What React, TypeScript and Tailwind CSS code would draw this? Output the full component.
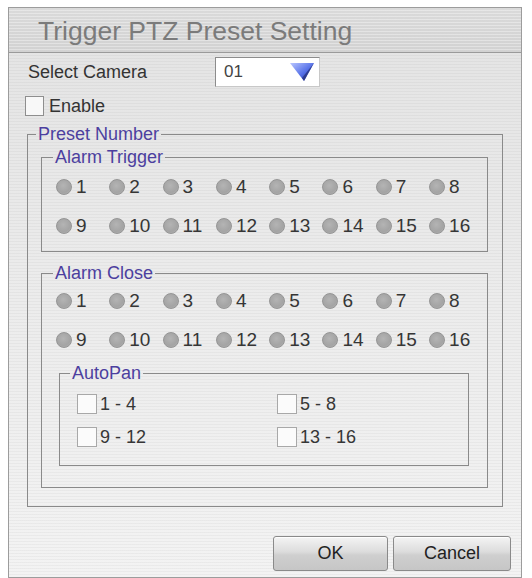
import React from "react";

const presets = Array.from({ length: 16 }, (_, i) => i + 1);
const autoPanRanges = ["1 - 4", "5 - 8", "9 - 12", "13 - 16"];

function Radio({ label }: { label: number }) {
  return (
    <label className="flex items-center h-[20px] gap-[4px] text-[19px] leading-[20px] text-[#363636]">
      <span className="block shrink-0 w-[16px] h-[16px] rounded-full border border-[#959595] bg-[radial-gradient(circle_at_45%_40%,#b4b4b4_0%,#a4a4a4_60%,#b8b8b8_100%)]" />
      {label}
    </label>
  );
}

function CheckBox({ label }: { label: string }) {
  return (
    <label className="flex items-center h-[20px] gap-[3px] text-[18px] leading-[20px] text-[#363636]">
      <span className="block shrink-0 w-[20px] h-[20px] border border-[#a8a8a8] bg-[#fbfbfb]" />
      {label}
    </label>
  );
}

function Group({
  title,
  legendOffset,
  className,
  bodyClass,
  children,
}: {
  title: string;
  legendOffset: string;
  className: string;
  bodyClass: string;
  children: React.ReactNode;
}) {
  return (
    <fieldset className={`min-w-0 border border-[#8a8a8a] ${className}`}>
      <legend
        className={`${legendOffset} px-[2px] text-[18px] leading-[18px] text-[#4c3f9f]`}
      >
        {title}
      </legend>
      <div className={bodyClass}>{children}</div>
    </fieldset>
  );
}

function PresetGrid() {
  return (
    <div className="grid grid-cols-[repeat(8,53.3px)] gap-y-[19px]">
      {presets.map((n) => (
        <Radio key={n} label={n} />
      ))}
    </div>
  );
}

export default function App() {
  return (
    <div className="w-[532px] h-[578px] bg-white pt-[7px] pl-[8px] font-['Liberation_Sans',Arial,sans-serif]">
      <div className="w-[514px] h-[571px] border border-[#9c9c9c] flex flex-col bg-[repeating-linear-gradient(0deg,rgba(255,255,255,0)_0px,rgba(255,255,255,0)_2px,rgba(0,0,0,0.035)_2px,rgba(0,0,0,0.035)_3px),linear-gradient(180deg,#e3e3e3_0%,#ebebeb_45%,#f3f3f3_100%)]">
        {/* title bar */}
        <div className="h-[45px] shrink-0 border-b border-[#9a9a9a] pl-[29px] flex items-center bg-[repeating-linear-gradient(0deg,rgba(255,255,255,0)_0px,rgba(255,255,255,0)_2px,rgba(255,255,255,0.35)_2px,rgba(255,255,255,0.35)_3px),linear-gradient(180deg,#dadada_0%,#d2d2d2_100%)]">
          <span className="text-[26.5px] leading-[30px] text-[#7b7b7b] pt-[1px]">
            Trigger PTZ Preset Setting
          </span>
        </div>

        {/* camera select */}
        <div className="mt-[4px] h-[30px] flex items-center pl-[19px]">
          <span className="w-[187px] text-[18px] text-[#333]">Select Camera</span>
          <div className="w-[105px] h-[30px] border border-[#8c8c8c] border-b-[#c8c8c8] border-r-[#c8c8c8] bg-white flex items-center pl-[8px] pr-[4px]">
            <span className="flex-1 text-[17px] text-[#444]">01</span>
            <svg width="26" height="22" viewBox="0 0 26 22">
              <defs>
                <linearGradient id="ddArrow" x1="0" y1="0" x2="1" y2="1">
                  <stop offset="0%" stopColor="#b9c6ff" />
                  <stop offset="55%" stopColor="#5570e8" />
                  <stop offset="100%" stopColor="#1f2f9a" />
                </linearGradient>
              </defs>
              <polygon points="1,2 25,2 15,20" fill="url(#ddArrow)" />
              <polygon points="25,2 15,20 13,17" fill="#24307a" opacity="0.75" />
            </svg>
          </div>
        </div>

        {/* enable */}
        <div className="mt-[9px] h-[20px] flex items-center pl-[16px] gap-[5px] text-[18px] text-[#333]">
          <span className="block w-[19px] h-[20px] border border-[#8e8e8e] bg-[#f8f8f8]" />
          Enable
        </div>

        <Group
          title="Preset Number"
          legendOffset="ml-[8px]"
          className="mt-[9px] ml-[18px] w-[476px]"
          bodyClass="pt-[5px] pl-[13px] pr-[14px] pb-[18px]"
        >
          <Group
            title="Alarm Trigger"
            legendOffset="ml-[11px]"
            className="w-[447px]"
            bodyClass="pt-[11px] pl-[14px] pb-[15px]"
          >
            <PresetGrid />
          </Group>

          <Group
            title="Alarm Close"
            legendOffset="ml-[11px]"
            className="mt-[12px] w-[447px]"
            bodyClass="pt-[9px] pl-[14px] pb-[21px]"
          >
            <PresetGrid />
            <Group
              title="AutoPan"
              legendOffset="ml-[10px]"
              className="mt-[14px] ml-[3px] w-[410px]"
              bodyClass="pt-[12px] pl-[17px] pb-[18px]"
            >
              <div className="grid grid-cols-[200px_1fr] gap-y-[13px]">
                {autoPanRanges.map((r) => (
                  <CheckBox key={r} label={r} />
                ))}
              </div>
            </Group>
          </Group>
        </Group>

        {/* dialog buttons */}
        <div className="mt-[29px] flex justify-end gap-[5px] pr-[10px]">
          <button className="w-[115px] h-[35px] rounded-[3px] border border-[#8a8a8a] bg-[linear-gradient(180deg,#f4f4f4_0%,#dcdcdc_45%,#cfcfcf_55%,#c6c6c6_100%)] text-[18px] text-[#222] shadow-[inset_0_1px_0_#fff]">
            OK
          </button>
          <button className="w-[118px] h-[35px] rounded-[3px] border border-[#8a8a8a] bg-[linear-gradient(180deg,#f4f4f4_0%,#dcdcdc_45%,#cfcfcf_55%,#c6c6c6_100%)] text-[18px] text-[#222] shadow-[inset_0_1px_0_#fff]">
            Cancel
          </button>
        </div>
      </div>
    </div>
  );
}
